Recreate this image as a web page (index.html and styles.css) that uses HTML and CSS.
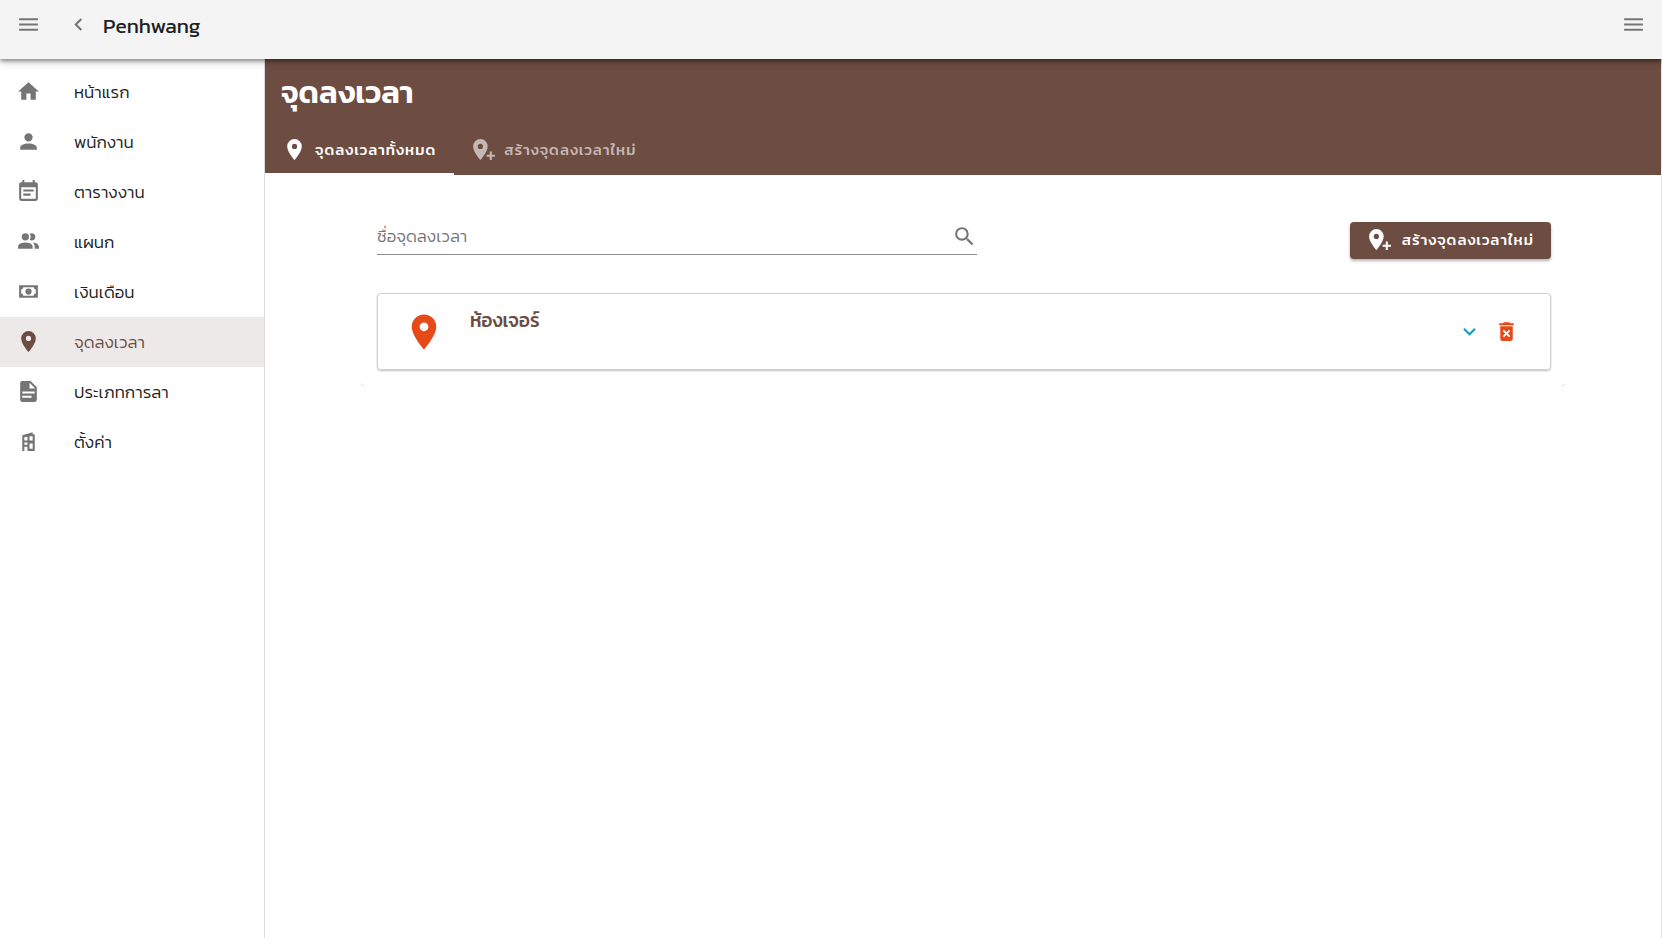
FILE: index.html
```html
<!DOCTYPE html>
<html lang="th">
<head>
<meta charset="utf-8">
<title>Penhwang</title>
<link rel="stylesheet" href="styles.css">
</head>
<body>
<header class="topbar">
  <button class="icon-btn" aria-label="เมนู"><svg class="icon" viewBox="0 0 24 24"><path d="M3,6H21V8H3V6M3,11H21V13H3V11M3,16H21V18H3V16Z"/></svg></button>
  <button class="icon-btn" aria-label="ย้อนกลับ"><svg class="icon" viewBox="0 0 24 24"><path d="M15.41,16.58L10.83,12L15.41,7.41L14,6L8,12L14,18L15.41,16.58Z"/></svg></button>
  <span class="brand">Penhwang</span>
  <button class="icon-btn push" aria-label="ตัวเลือก"><svg class="icon" viewBox="0 0 24 24"><path d="M3,6H21V8H3V6M3,11H21V13H3V11M3,16H21V18H3V16Z"/></svg></button>
</header>
<div class="shell">
  <nav class="sidebar">
    <a class="nav-item" href="#"><svg class="icon" viewBox="0 0 24 24"><path d="M10,20V14H14V20H19V12H22L12,3L2,12H5V20H10Z"/></svg><span>หน้าแรก</span></a>
    <a class="nav-item" href="#"><svg class="icon" viewBox="0 0 24 24"><path d="M12,4A4,4 0 0,1 16,8A4,4 0 0,1 12,12A4,4 0 0,1 8,8A4,4 0 0,1 12,4M12,14C16.42,14 20,15.79 20,18V20H4V18C4,15.79 7.58,14 12,14Z"/></svg><span>พนักงาน</span></a>
    <a class="nav-item" href="#"><svg class="icon" viewBox="0 0 24 24"><path d="M14,14H7V16H14M19,19H5V8H19M19,3H18V1H16V3H8V1H6V3H5C3.89,3 3,3.9 3,5V19A2,2 0 0,0 5,21H19A2,2 0 0,0 21,19V5A2,2 0 0,0 19,3M17,10H7V12H17V10Z"/></svg><span>ตารางงาน</span></a>
    <a class="nav-item" href="#"><svg class="icon" viewBox="0 0 24 24"><path d="M13.07 10.41A5 5 0 0 0 13.07 4.59A3.39 3.39 0 0 1 15 4A3.5 3.5 0 0 1 15 11A3.39 3.39 0 0 1 13.07 10.41M5.5 7.5A3.5 3.5 0 1 1 9 11A3.5 3.5 0 0 1 5.5 7.5M16 17V19H2V17S2 13 9 13 16 17 16 17M15.95 13A5.32 5.32 0 0 1 18 17V19H22V17S22 13.37 15.94 13Z"/></svg><span>แผนก</span></a>
    <a class="nav-item" href="#"><svg class="icon" viewBox="0 0 24 24"><path fill-rule="evenodd" d="M3,6H21V18H3V6M7,8A2,2 0 0,1 5,10V14A2,2 0 0,1 7,16H17A2,2 0 0,1 19,14V10A2,2 0 0,1 17,8H7M12,9A3,3 0 0,1 12,15A3,3 0 0,1 12,9Z"/></svg><span>เงินเดือน</span></a>
    <a class="nav-item active" href="#" aria-current="page"><svg class="icon" viewBox="0 0 24 24"><path d="M12,11.5A2.5,2.5 0 0,1 9.5,9A2.5,2.5 0 0,1 12,6.5A2.5,2.5 0 0,1 14.5,9A2.5,2.5 0 0,1 12,11.5M12,2A7,7 0 0,0 5,9C5,14.25 12,22 12,22C12,22 19,14.25 19,9A7,7 0 0,0 12,2Z"/></svg><span>จุดลงเวลา</span></a>
    <a class="nav-item" href="#"><svg class="icon" viewBox="0 0 24 24"><path d="M13,9H18.5L13,3.5V9M6,2H14L20,8V20A2,2 0 0,1 18,22H6C4.89,22 4,21.1 4,20V4C4,2.89 4.89,2 6,2M15,18V16H6V18H15M18,14V12H6V14H18Z"/></svg><span>ประเภทการลา</span></a>
    <a class="nav-item" href="#"><svg class="icon" viewBox="0 0 24 24"><path fill-rule="evenodd" d="M6,6L16,3V5H18V21H6V6M8,8V11H11V7.5L8,8M13,7V11H16V7H13M8,13V15H11V13H8M13,14V19H16V14H13M8,17V21H11V17H8Z"/></svg><span>ตั้งค่า</span></a>
  </nav>
  <main class="main">
    <section class="banner">
      <h1 class="title">จุดลงเวลา</h1>
      <div class="tabs" role="tablist">
        <button class="tab selected" role="tab" aria-selected="true"><svg class="icon" viewBox="0 0 24 24"><path d="M12,11.5A2.5,2.5 0 0,1 9.5,9A2.5,2.5 0 0,1 12,6.5A2.5,2.5 0 0,1 14.5,9A2.5,2.5 0 0,1 12,11.5M12,2A7,7 0 0,0 5,9C5,14.25 12,22 12,22C12,22 19,14.25 19,9A7,7 0 0,0 12,2Z"/></svg><span>จุดลงเวลาทั้งหมด</span></button>
        <button class="tab" role="tab" aria-selected="false"><svg class="icon" viewBox="0 0 24 24"><path d="M9,11.5A2.5,2.5 0 0,0 11.5,9A2.5,2.5 0 0,0 9,6.5A2.5,2.5 0 0,0 6.5,9A2.5,2.5 0 0,0 9,11.5M9,2C12.86,2 16,5.13 16,9C16,14.25 9,22 9,22C9,22 2,14.25 2,9A7,7 0 0,1 9,2M15,17H18V14H20V17H23V19H20V22H18V19H15V17Z"/></svg><span>สร้างจุดลงเวลาใหม่</span></button>
      </div>
    </section>
    <section class="panel">
      <div class="toolbar">
        <label class="search"><input type="text" placeholder="ชื่อจุดลงเวลา" aria-label="ชื่อจุดลงเวลา"><svg class="icon" viewBox="0 0 24 24"><path d="M9.5,3A6.5,6.5 0 0,1 16,9.5C16,11.11 15.41,12.59 14.44,13.73L14.71,14H15.5L20.5,19L19,20.5L14,15.5V14.71L13.73,14.44C12.59,15.41 11.11,16 9.5,16A6.5,6.5 0 0,1 3,9.5A6.5,6.5 0 0,1 9.5,3M9.5,5C7,5 5,7 5,9.5C5,12 7,14 9.5,14C12,14 14,12 14,9.5C14,7 12,5 9.5,5Z"/></svg></label>
        <button class="create"><svg class="icon" viewBox="0 0 24 24"><path d="M9,11.5A2.5,2.5 0 0,0 11.5,9A2.5,2.5 0 0,0 9,6.5A2.5,2.5 0 0,0 6.5,9A2.5,2.5 0 0,0 9,11.5M9,2C12.86,2 16,5.13 16,9C16,14.25 9,22 9,22C9,22 2,14.25 2,9A7,7 0 0,1 9,2M15,17H18V14H20V17H23V19H20V22H18V19H15V17Z"/></svg><span>สร้างจุดลงเวลาใหม่</span></button>
      </div>
      <article class="place">
        <svg class="icon pin" viewBox="0 0 24 24"><path d="M12,11.5A2.5,2.5 0 0,1 9.5,9A2.5,2.5 0 0,1 12,6.5A2.5,2.5 0 0,1 14.5,9A2.5,2.5 0 0,1 12,11.5M12,2A7,7 0 0,0 5,9C5,14.25 12,22 12,22C12,22 19,14.25 19,9A7,7 0 0,0 12,2Z"/></svg>
        <h2 class="place-name">ห้องเจอร์</h2>
        <button class="icon-btn expand" aria-label="ขยาย"><svg class="icon" viewBox="0 0 24 24"><path d="M7.41,8.58L12,13.17L16.59,8.58L18,10L12,16L6,10L7.41,8.58Z"/></svg></button>
        <button class="icon-btn delete" aria-label="ลบ"><svg class="icon" viewBox="0 0 24 24"><path fill-rule="evenodd" d="M6,7H18V19A2,2 0 0,1 16,21H8A2,2 0 0,1 6,19V7M9.6,10.4L8.4,11.6L10.8,14L8.4,16.4L9.6,17.6L12,15.2L14.4,17.6L15.6,16.4L13.2,14L15.6,11.6L14.4,10.4L12,12.8L9.6,10.4M5,4H8.5L9.5,3H14.5L15.5,4H19V6H5V4Z"/></svg></button>
      </article>
    </section>
  </main>
</div>
</body>
</html>
```
FILE: styles.css
```css
* { box-sizing: border-box; }

body {
  margin: 0;
  min-height: 100vh;
  display: flex;
  flex-direction: column;
  background: #fff;
  color: #212121;
  font-family: Kanit, "Noto Sans Thai", "Noto Sans", sans-serif;
  font-size: 17px;
  font-weight: 300;
  line-height: 24px;
}

button, input { font: inherit; color: inherit; }
button { border: 0; background: none; padding: 0; cursor: pointer; }

.icon { display: block; flex: none; width: 25px; height: 25px; fill: currentColor; }

.topbar {
  position: relative;
  z-index: 1;
  display: flex;
  align-items: flex-start;
  height: 59px;
  padding: 0 4px 0 3px;
  background: #f4f4f4;
  box-shadow: 0 2px 4px rgba(0, 0, 0, .4), 0 4px 8px rgba(0, 0, 0, .14);
}
.icon-btn { display: grid; place-items: center; width: 50px; height: 49px; color: #757575; }
.brand { padding-top: 12px; font-size: 21px; line-height: 28px; font-weight: 400; }
.push { margin-left: auto; }

.shell { flex: 1; display: flex; border-right: 1px solid #e6e6e6; }
.sidebar { flex: none; width: 265px; padding-top: 8px; border-right: 1px solid #dcdcdc; }
.nav-item {
  display: flex;
  align-items: center;
  gap: 33px;
  height: 50px;
  padding: 0 16px 1px;
  color: #212121;
  text-decoration: none;
}
.nav-item .icon { color: #757575; }
.nav-item.active { background: #ede9e8; color: #6d4c41; }
.nav-item.active .icon { color: #6d4c41; }

.main { flex: 1; min-width: 0; }
.banner { display: flex; flex-direction: column; height: 116px; background: #6d4c41; color: #fff; }
.title { flex: 1; margin: 0; padding: 11px 16px 0; font-size: 31px; line-height: 44px; font-weight: 600; }
.tabs { display: flex; }
.tab {
  display: flex;
  align-items: center;
  gap: 8px;
  height: 50px;
  padding: 1px 18px 0 17px;
  border-bottom: 2px solid transparent;
  color: #c5b7b3;
  font-size: 15px;
  font-weight: 500;
  letter-spacing: 1px;
}
.tab.selected { border-color: #fff; color: #fff; }

.panel {
  position: relative;
  max-width: 1206px;
  margin: 11px auto 0;
  padding: 16px 15px 16px 17px;
}
/* faint rounded corners of the surrounding card */
.panel::before,
.panel::after {
  content: "";
  position: absolute;
  bottom: 0;
  width: 4px;
  height: 4px;
  border-bottom: 1px solid #dcdcdc;
}
.panel::before { left: 0; border-bottom-left-radius: 4px; }
.panel::after { right: 0; border-bottom-right-radius: 4px; }

.toolbar { display: flex; align-items: flex-start; justify-content: space-between; gap: 24px; margin-bottom: 34px; padding-top: 20px; }
.search {
  display: flex;
  align-items: center;
  flex: 0 1 600px;
  height: 33px;
  padding-bottom: 4px;
  border-bottom: 1px solid #8c8c8c;
  color: #757575;
}
.search input { flex: 1; min-width: 0; padding: 0; border: 0; outline: 0; background: none; }
.search input::placeholder { color: #757575; opacity: 1; }
.create {
  display: flex;
  align-items: center;
  gap: 10px;
  height: 37px;
  padding: 0 17px 2px;
  border-radius: 4px;
  background: #6d4c41;
  box-shadow: 0 2px 3px rgba(0, 0, 0, .3);
  color: #fff;
  font-size: 15px;
  font-weight: 500;
  letter-spacing: 1px;
}
.place {
  display: flex;
  align-items: center;
  height: 77px;
  padding: 0 25px;
  border: 1px solid #d0d0d0;
  border-radius: 4px;
  box-shadow: 0 1px 2px rgba(0, 0, 0, .25);
}
.pin { width: 42px; height: 42px; color: #e64a19; }
.place-name { flex: 1; align-self: flex-start; margin: 15px 0 0 25px; font-size: 19px; line-height: 24px; font-weight: 500; color: #6d4c41; }
.place .icon-btn { width: 37px; height: 37px; }
.place .expand { color: #1e96c8; }
.place .delete { color: #e64a19; }
```
